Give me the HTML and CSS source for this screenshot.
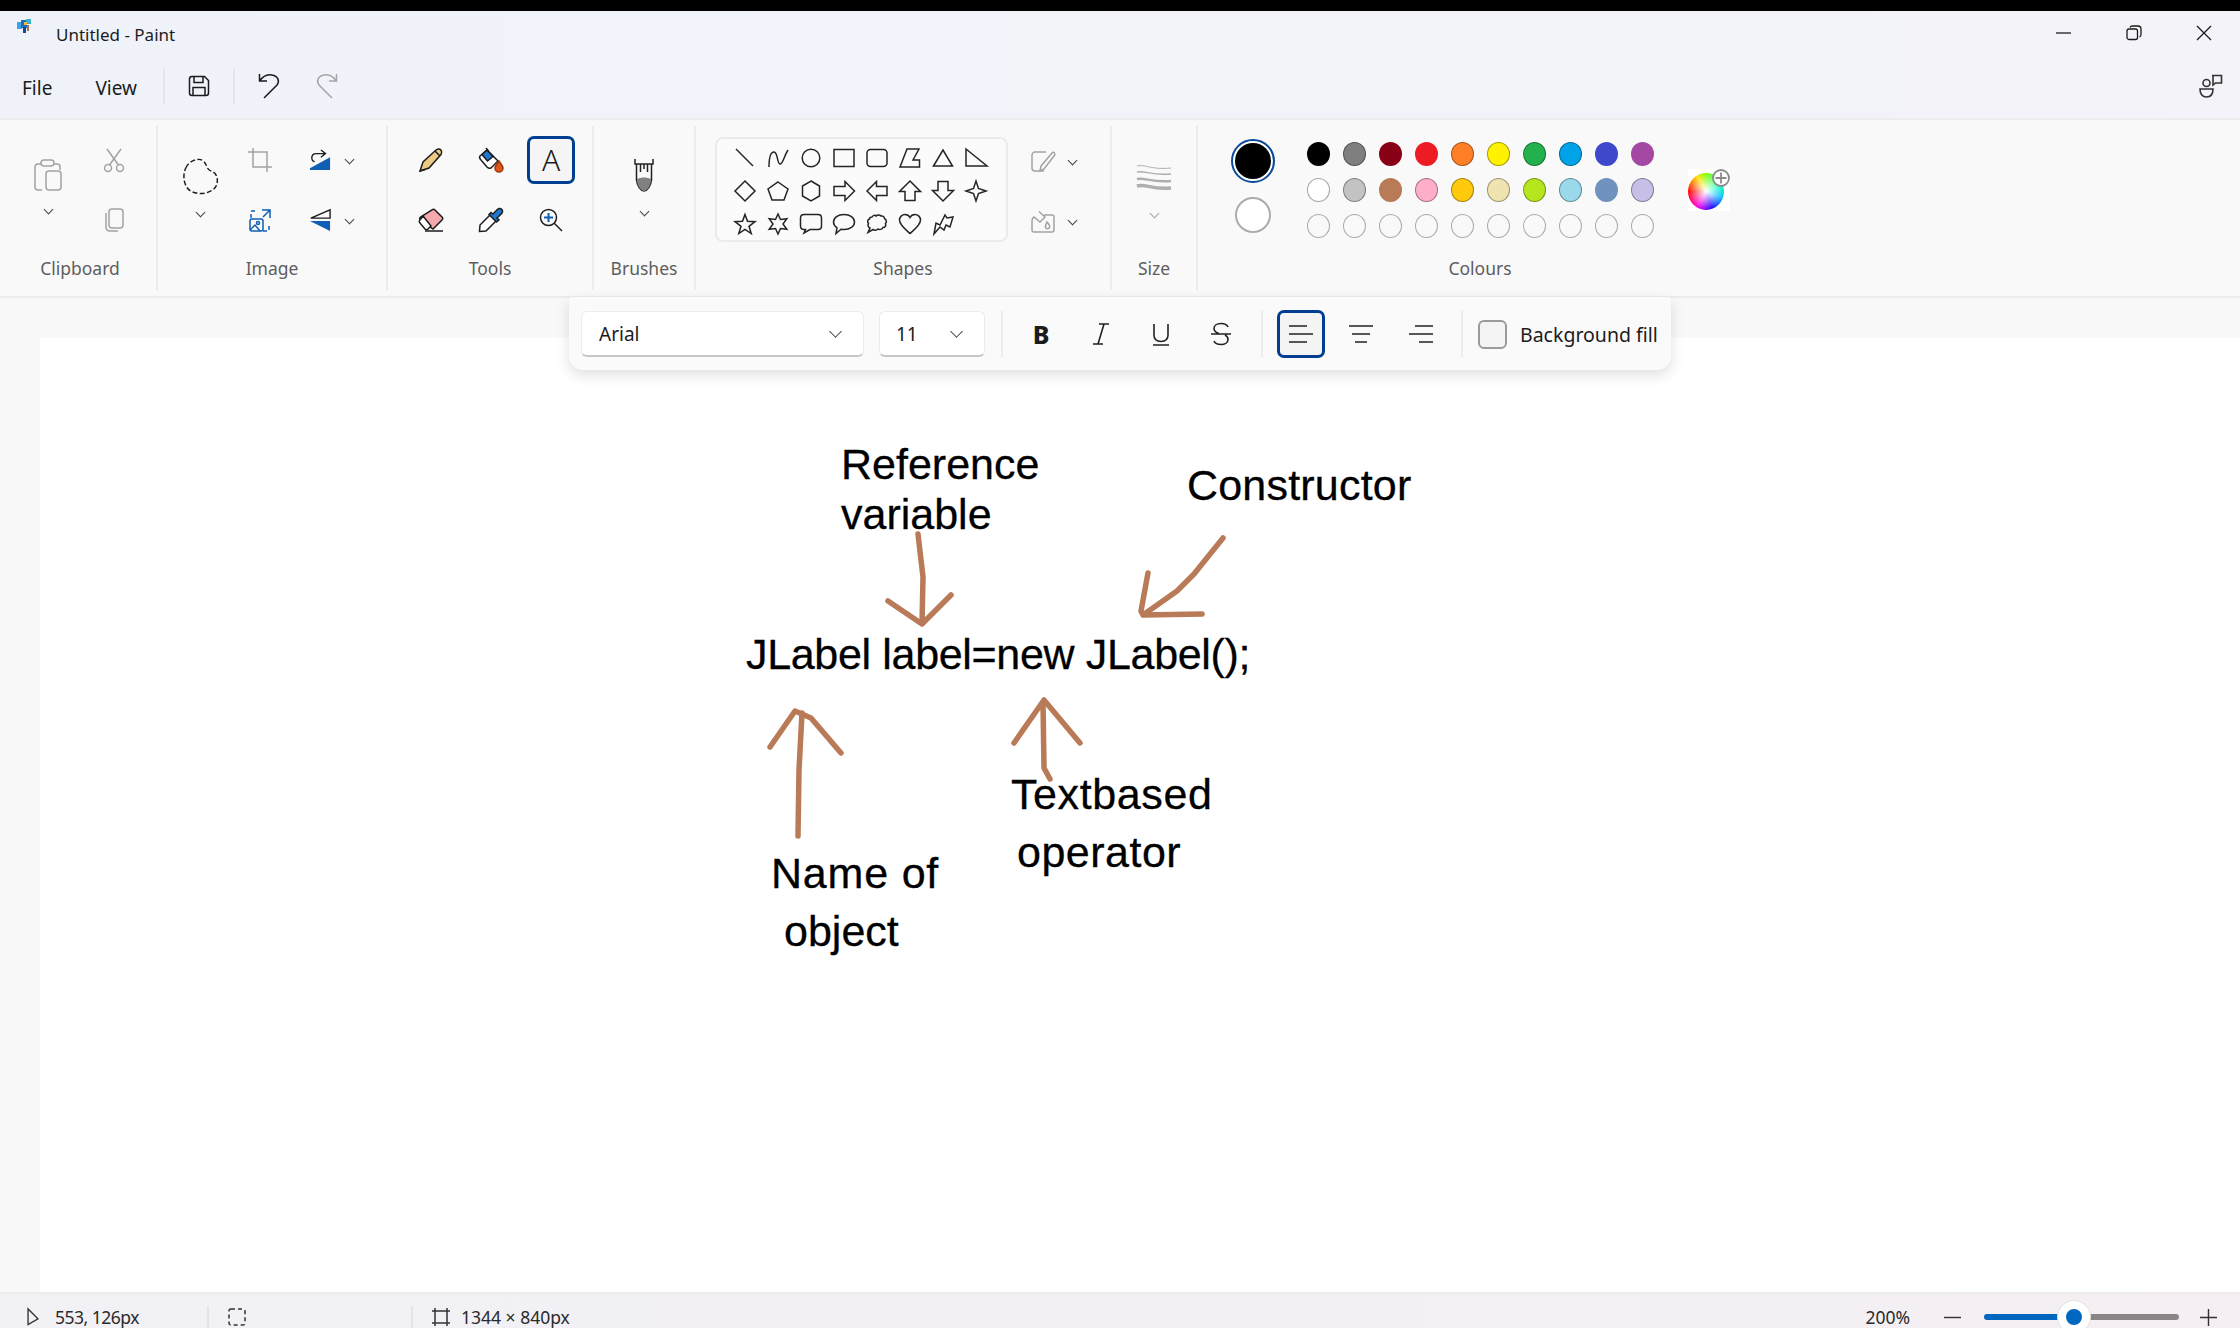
FILE: index.html
```html
<!DOCTYPE html>
<html>
	<head>
		<meta charset="UTF-8"/>
		<title>Untitled - Paint</title>
		<link rel="stylesheet" href="styles.css">
	</head>
	<body>
		<div class="topline"></div>

		<div class="header">
			<div class="titlebar">
				<svg class="app-icon" viewBox="0 0 14 14">
					<rect class="f-sky" x="0" y="3" width="5" height="7"/>
					<rect class="f-blue" x="4" y="1" width="6" height="8"/>
					<rect class="f-teal" x="9" y="0" width="5" height="5"/>
					<rect class="f-gold" x="7" y="3" width="3" height="3"/>
					<rect class="f-navy" x="6" y="8" width="3" height="6"/>
					<rect class="f-brown" x="10" y="6" width="2" height="6"/>
				</svg>
				<span class="title-text">Untitled - Paint</span>
				<div class="window-buttons">
					<svg class="win-btn" viewBox="0 0 16 16"><path d="M0 8H15"/></svg>
					<svg class="win-btn" viewBox="0 0 16 16"><rect x="1" y="4" width="10.500" height="10.500" rx="2"/><path d="M4 2.500C4.500 1.300 5 1 6.500 1H12C14 1 15 2 15 4V9.500C15 11 14.500 11.500 13.500 12"/></svg>
					<svg class="win-btn" viewBox="0 0 16 16"><path d="M1 1L15 15M15 1L1 15"/></svg>
				</div>
			</div>

			<div class="menubar">
				<span class="menu-item menu-file">File</span>
				<span class="menu-item menu-view">View</span>
				<span class="menu-sep menu-sep-first"></span>
				<svg class="menu-icon" viewBox="0 0 22 22"><path d="M1.500 4C1.500 2.500 2.500 1.500 4 1.500H16.500L20.500 5.500V18C20.500 19.500 19.500 20.500 18 20.500H4C2.500 20.500 1.500 19.500 1.500 18Z"/><path d="M6 1.500V7.500H15V1.500M5 20.500V12.500H17V20.500"/></svg>
				<span class="menu-sep"></span>
				<svg class="menu-icon menu-undo" viewBox="0 0 22 26"><path d="M1.500 1V8H9M1.500 8C5 3 10 1 14 2C20 3 22 8 19 12L6 25"/></svg>
				<svg class="menu-icon menu-redo" viewBox="0 0 22 26"><path d="M20.500 1V8H13M20.500 8C17 3 12 1 8 2C2 3 0 8 3 12L16 25"/></svg>
				<svg class="feedback" viewBox="0 0 24 24"><circle cx="7.500" cy="9" r="3.500"/><path d="M1 15H14C14 21 11 23 7.500 23C4 23 1 21 1 15Z"/><path d="M13 1.500H22.500V9H16.500L14 11V1.500Z"/></svg>
			</div>
		</div>

		<div class="ribbon">
			<div class="group group-clipboard">
				<div class="group-body tool-grid">
					<div class="tall-tool">
						<svg class="ic dim ic-paste" viewBox="0 0 28 34"><path d="M8 6H4C2 6 1 7 1 9V29C1 31 2 32 4 32H8M20 6H23C25 6 26 7 26 9V12"/><rect x="7" y="2" width="13" height="6" rx="3"/><rect x="12" y="13" width="15" height="19" rx="3"/></svg>
						<span class="chev"></span>
					</div>
					<div class="tool">
						<svg class="ic dim" viewBox="0 0 24 24"><circle cx="6" cy="20" r="3.500"/><circle cx="18" cy="20" r="3.500"/><path d="M7.500 17L19 1M16.500 17L5 1"/></svg>
					</div>
					<div class="tool tool-r2">
						<svg class="ic dim" viewBox="0 0 24 24"><rect x="7" y="1" width="14" height="19" rx="3"/><path d="M4 5V19C4 21.500 5.500 23 8 23H16"/></svg>
					</div>
				</div>
				<div class="group-label">Clipboard</div>
			</div>

			<div class="group group-image">
				<div class="group-body tool-grid">
					<div class="tall-tool">
						<svg class="ic ic-lasso" viewBox="0 0 38 38"><path class="dashed" d="M4 10C7 3 17 -1 22 3C26 7 25 11 29 13C36 15 38 22 35 29C31 36 18 39 9 34C2 30 0 18 4 10Z"/></svg>
						<span class="chev"></span>
					</div>
					<div class="tool">
						<svg class="ic dim" viewBox="0 0 24 24"><path d="M0 4H19V24M5 0V19H24"/></svg>
					</div>
					<div class="tool tool-split">
						<svg class="ic ic-sm" viewBox="0 0 24 24"><path class="f-ms" d="M1 23V21L23 9V23Z"/><path d="M18 5H8C4 5 3 8 3 10C3 12 4 13 6 14M13 1L18 5L13 9"/></svg>
						<span class="chev"></span>
					</div>
					<div class="tool tool-r2">
						<svg class="ic ic-blue" viewBox="0 0 24 24"><path class="dashed-sm" d="M3 10V3H10M15 23H21V16"/><path d="M14 2H22V10M22 2L15 9"/><rect x="2" y="11" width="13" height="12" rx="2"/><circle cx="10" cy="15" r="1.500"/><path d="M2 22L7 17L12 23"/></svg>
					</div>
					<div class="tool tool-split tool-r2">
						<svg class="ic ic-sm" viewBox="0 0 24 24"><path class="n-line" d="M23 1V10H2Z"/><path class="f-ms" d="M1 13H23V24Z"/></svg>
						<span class="chev"></span>
					</div>
				</div>
				<div class="group-label">Image</div>
			</div>

			<div class="group group-tools">
				<div class="group-body tool-grid three">
					<div class="tool">
						<svg class="ic" viewBox="0 0 24 24"><path class="f-pencil" d="M1 23L4 14L17 2C19 0.500 21 1 22 2C23 3.500 23 5 22 6.500L10 20Z"/><path d="M16 3L21 8M1 23L6 21.500"/></svg>
					</div>
					<div class="tool">
						<svg class="ic" viewBox="0 0 24 24"><path class="f-white" d="M1 8L8 2L19 13L12 20C10 21 9 20 8 19L2 12C1 11 0 9.500 1 8Z"/><path class="f-ms-s" d="M3 6.500L8 2L14 8.500L8.500 13Z"/><path class="f-drop" d="M20 13C22 16 24 18 24 20C24 22.500 22 24 20 24C18 24 16 22.500 16 20C16 18 18 16 20 13Z"/><path d="M7 0L9.500 3"/></svg>
					</div>
					<div class="tool tool-active">
						<span class="big-a">A</span>
					</div>
					<div class="tool tool-r2">
						<svg class="ic" viewBox="0 0 24 24"><path class="f-eraser" d="M13 2C14 1 15 1 16 2L23 9C24 10 24 11 23 12L14 21L1 12C0.500 11 0.500 10 1.500 9Z"/><path class="f-white" d="M4 8L12 18L9 21C8 22 7 22 6 21L1 15C0 14 0 13 1 12Z"/><path d="M6 23H24"/></svg>
					</div>
					<div class="tool tool-r2">
						<svg class="ic" viewBox="0 0 24 24"><path class="f-white" d="M11 7L1 17L0.500 23.500L7 23L17 13"/><path class="f-ms-s" d="M14 6C16 4 18 1 20 0.500C22 0 24 2 23.500 4C23 6 20 8 18 10L20 12L17.500 14L10 6.500L12 4.500Z"/></svg>
					</div>
					<div class="tool tool-r2">
						<svg class="ic ic-zoom" viewBox="0 0 24 24"><circle cx="9.500" cy="9.500" r="8"/><path d="M15 15L23 23"/><path class="n-ms" d="M5 9.500H14M9.500 5V14"/></svg>
					</div>
				</div>
				<div class="group-label">Tools</div>
			</div>

			<div class="group group-brushes">
				<div class="group-body center-col">
					<svg class="ic-brush" viewBox="0 0 20 34"><path d="M1 1V6H19V1M2.500 6V22C3 28 7 33 10 33C13 33 17 28 17.500 22V6"/><path class="f-grey" d="M3 21C8 19 12 19 17 21C17 28 13 33 10 33C7 33 3 28 3 21Z"/><path d="M6.500 6V14M10 6V11M13.500 6V14"/></svg>
					<span class="chev"></span>
				</div>
				<div class="group-label">Brushes</div>
			</div>

			<div class="group group-shapes">
				<div class="group-body shapes-row">
					<div class="shape-box">
						<svg class="shape" viewBox="0 0 20 20"><path d="M1 1L18 18"/></svg>
						<svg class="shape" viewBox="0 0 20 20"><path d="M1 19C1 9 3 4 6 4C10 4 9 16 12 16C15 16 16 8 20 2"/></svg>
						<svg class="shape" viewBox="0 0 20 20"><circle cx="10" cy="10" r="8.800"/></svg>
						<svg class="shape" viewBox="0 0 20 20"><rect x="0" y="1.500" width="20" height="17"/></svg>
						<svg class="shape" viewBox="0 0 20 20"><rect x="0" y="1.500" width="20" height="17" rx="3.500"/></svg>
						<svg class="shape" viewBox="0 0 20 20"><path d="M0 19L7 1H19L13 12H19.500V19Z"/></svg>
						<svg class="shape" viewBox="0 0 20 20"><path d="M0.500 18L10 2L19.500 18Z"/></svg>
						<svg class="shape" viewBox="0 0 20 20"><path d="M0 1V18H21Z"/></svg>

						<svg class="shape" viewBox="0 0 20 20"><path d="M10 0L20 10L10 20L0 10Z"/></svg>
						<svg class="shape" viewBox="0 0 20 20"><path d="M10 1L20 8L16 19H4L0 8Z"/></svg>
						<svg class="shape" viewBox="0 0 20 20"><path d="M10 0L18.500 5V15L10 20L1.500 15V5Z"/></svg>
						<svg class="shape" viewBox="0 0 20 20"><path d="M0 5.500H11V0.500L20.500 10L11 19.500V14.500H0Z"/></svg>
						<svg class="shape" viewBox="0 0 20 20"><path d="M20 5.500H9.500V0.500L0 10L9.500 19.500V14.500H20Z"/></svg>
						<svg class="shape" viewBox="0 0 20 20"><path d="M10 0L20.500 10.500H15V19.500H5V10.500H-0.500Z"/></svg>
						<svg class="shape" viewBox="0 0 20 20"><path d="M10 20L20.500 9.500H15V0.500H5V9.500H-0.500Z"/></svg>
						<svg class="shape" viewBox="0 0 20 20"><path d="M10 0L12.500 7.500L20 10L12.500 12.500L10 20L7.500 12.500L0 10L7.500 7.500Z"/></svg>

						<svg class="shape" viewBox="0 0 20 20"><path d="M10 0.500L12.500 7.300L20 7.700L14 12.300L16.200 19.500L10 15.300L3.800 19.500L6 12.300L0 7.700L7.500 7.300Z"/></svg>
						<svg class="shape" viewBox="0 0 20 20"><path d="M10 0L12.500 5.500L18.800 4.800L15 10L18.800 15.200L12.500 14.500L10 20L7.500 14.500L1.200 15.200L5 10L1.200 4.800L7.500 5.500Z"/></svg>
						<svg class="shape shape-wide" viewBox="0 0 22 20"><path d="M4 0.500H18C20 0.500 21.500 2 21.500 4V12C21.500 14 20 15.500 18 15.500H10L4 19L5.500 15.500H4C2 15.500 0.500 14 0.500 12V4C0.500 2 2 0.500 4 0.500Z"/></svg>
						<svg class="shape shape-wide" viewBox="0 0 22 20"><path d="M11 0.500C17 0.500 21.500 3.500 21.500 8C21.500 12.500 17 15.500 11 15.500C9.500 15.500 9 15.500 8 15.300L3 19.500L4 13.800C2 12.500 0.500 10.500 0.500 8C0.500 3.500 5 0.500 11 0.500Z"/></svg>
						<svg class="shape" viewBox="0 0 20 20"><path d="M5 3C6 1 8 1 9 2C10 0.500 13 0.500 14 2C16 1.500 17.500 3 17.500 4.500C19.500 5.500 20 8 18.500 9.500C19.500 11.500 18 13.500 16 13.500C15 15.500 12.500 16 11 15C9.500 16.500 7 16.500 6 15.500L1 18.500L3 14C1 13 0.500 11 1.500 9.500C0 8 0.500 5.500 2.500 5C2.500 4 3.500 3 5 3Z"/></svg>
						<svg class="shape shape-wide" viewBox="0 0 22 20"><path d="M11 19.500C7 16 0.500 11 0.500 6C0.500 3 3 0.500 6 0.500C8 0.500 10 1.500 11 3.500C12 1.500 14 0.500 16 0.500C19 0.500 21.500 3 21.500 6C21.500 11 15 16 11 19.500Z"/></svg>
						<svg class="shape" viewBox="0 0 20 20"><path d="M1 20L3 9L7 11L12 1L14 4L20 3L17 13L13 11L11 16L7 13Z"/></svg>
					</div>
					<div class="shape-options">
						<div class="shape-option">
							<svg class="ic dim" viewBox="0 0 24 22"><path d="M15 1H4C2.500 1 1 2.500 1 4V17C1 19 2.500 20 4 20H13"/><path d="M10 15L21 2C22 1 23 1 23.500 2C24 3 24 4 23 5L13 18L9 20Z"/></svg>
							<span class="chev"></span>
						</div>
						<div class="shape-option">
							<svg class="ic dim" viewBox="0 0 24 22"><path d="M8 0.500L14 6L9 11L3 6C1 7 1 9 1 10V19C1 20 2 21 3 21H21C22 21 23 20 23 19V6C23 5 22 4 21 4H13"/><path d="M16 11C18 13 19 15 18.500 16.500C18 18 15 18 14.500 16.500C14 15 15 13 16 11Z"/></svg>
							<span class="chev"></span>
						</div>
					</div>
				</div>
				<div class="group-label">Shapes</div>
			</div>

			<div class="group group-size">
				<div class="group-body center-col">
					<svg class="ic-size" viewBox="0 0 34 26"><path class="w1" d="M0 2C8 0 14 6 34 4"/><path class="w2" d="M0 8C8 6 14 12 34 10"/><path class="w3" d="M0 15C8 13 14 19 34 17"/><path class="w4" d="M0 22C8 19 14 26 34 24"/></svg>
					<span class="chev chev-dim"></span>
				</div>
				<div class="group-label">Size</div>
			</div>

			<div class="group group-colours">
				<div class="group-body colours-row">
					<div class="current-colours">
						<span class="current current-fg"><span class="current-dot"></span></span>
						<span class="current current-bg"></span>
					</div>
					<div class="palette">
						<span class="swatch c-black"></span><span class="swatch c-grey edged"></span><span class="swatch c-maroon"></span><span class="swatch c-red"></span><span class="swatch c-orange edged"></span><span class="swatch c-yellow edged"></span><span class="swatch c-green edged"></span><span class="swatch c-cyan edged"></span><span class="swatch c-indigo"></span><span class="swatch c-purple"></span>
						<span class="swatch c-white edged"></span><span class="swatch c-silver edged"></span><span class="swatch c-brown"></span><span class="swatch c-pink edged"></span><span class="swatch c-gold edged"></span><span class="swatch c-cream edged"></span><span class="swatch c-lime edged"></span><span class="swatch c-sky edged"></span><span class="swatch c-steel"></span><span class="swatch c-lavender edged"></span>
						<span class="swatch empty"></span><span class="swatch empty"></span><span class="swatch empty"></span><span class="swatch empty"></span><span class="swatch empty"></span><span class="swatch empty"></span><span class="swatch empty"></span><span class="swatch empty"></span><span class="swatch empty"></span><span class="swatch empty"></span>
					</div>
					<div class="colour-wheel">
						<span class="wheel"></span>
						<svg class="wheel-plus" viewBox="0 0 18 18"><circle cx="9" cy="9" r="8"/><path d="M9 3.500V14.500M3.500 9H14.500"/></svg>
					</div>
				</div>
				<div class="group-label">Colours</div>
			</div>
		</div>

		<div class="workspace">
			<div class="canvas">
				<span class="drawn-text t-reference">Reference</span>
				<span class="drawn-text t-variable">variable</span>
				<span class="drawn-text t-constructor">Constructor</span>
				<span class="drawn-text t-code">JLabel label=new JLabel();</span>
				<span class="drawn-text t-textbased">Textbased</span>
				<span class="drawn-text t-operator">operator</span>
				<span class="drawn-text t-name">Name of</span>
				<span class="drawn-text t-object">object</span>

				<svg class="arrows" viewBox="40 338 2200 954">
					<path d="M918 534L923 577L922 624M888 601L922 624L951 595"/>
					<path d="M1223 538L1194 574L1177 591L1143 615M1148 573L1141 611L1143 615L1202 614"/>
					<path d="M798 836L799 770L802 713M770 747L795 711L811 718L841 753"/>
					<path d="M1050 779L1044 768L1043 702M1014 743L1044 700L1080 743"/>
				</svg>
			</div>

			<div class="text-toolbar">
				<div class="select select-font"><span>Arial</span><span class="chev chev-dark"></span></div>
				<div class="select select-size"><span>11</span><span class="chev chev-dark"></span></div>
				<span class="bar-sep"></span>
				<div class="fmt-btn"><span class="fmt-b">B</span></div>
				<div class="fmt-btn"><svg viewBox="0 0 20 24"><path d="M8 2H18M2 22H12M13 2L7 22"/></svg></div>
				<div class="fmt-btn"><svg viewBox="0 0 20 24"><path d="M3 2V13C3 18 6 19.500 10 19.500C14 19.500 17 18 17 13V2M2 23H18"/></svg></div>
				<div class="fmt-btn fmt-last"><svg viewBox="0 0 22 24"><path d="M18 5C17 2.500 14 1.500 11 1.500C7 1.500 4 3.500 4 6.500C4 9 6 10.500 9 11.500M1 12H21M15 13C17 14 18 15.500 18 17.500C18 20.500 15 22.500 11 22.500C8 22.500 5 21.500 4 19"/></svg></div>
				<span class="bar-sep"></span>
				<div class="fmt-btn fmt-active"><svg viewBox="0 0 24 18"><path d="M0 1H18M0 9H24M0 17H18"/></svg></div>
				<div class="fmt-btn"><svg viewBox="0 0 24 18"><path d="M0 1H24M3 9H21M6 17H18"/></svg></div>
				<div class="fmt-btn fmt-last"><svg viewBox="0 0 24 18"><path d="M6 1H24M0 9H24M10 17H24"/></svg></div>
				<span class="bar-sep"></span>
				<span class="checkbox"></span>
				<span class="check-label">Background fill</span>
			</div>
		</div>

		<div class="statusbar">
			<div class="status-cell status-pos">
				<svg class="status-icon" viewBox="0 0 14 20"><path d="M1.500 1V18.500L12.500 12Z"/></svg>
				<span class="pos-text">553, 126px</span>
			</div>
			<div class="status-cell status-sel">
				<svg class="status-icon" viewBox="0 0 18 18"><rect class="dashed-sm" x="1" y="1" width="16" height="16" rx="2"/></svg>
			</div>
			<div class="status-cell status-size">
				<svg class="status-icon" viewBox="0 0 18 18"><path d="M3 0V18M15 0V18M0 3H18M0 15H18"/></svg>
				<span>1344 × 840px</span>
			</div>
			<div class="zoom-controls">
				<span class="zoom-value">200%</span>
				<svg class="zoom-btn" viewBox="0 0 18 18"><path d="M0 9H18"/></svg>
				<div class="slider">
					<span class="slider-fill"></span>
					<span class="slider-rest"></span>
					<span class="slider-thumb"></span>
				</div>
				<svg class="zoom-btn" viewBox="0 0 18 18"><path d="M0 9H18M9 0V18"/></svg>
			</div>
		</div>
	</body>
</html>
```

FILE: styles.css
```css
html, body {
	margin: 0;
	padding: 0;
	height: 100%;
	overflow: hidden;
	font-family: "Noto Sans", sans-serif;
	color: #1b1b1b;
	background: white;
}

body {
	display: flex;
	flex-direction: column;
	height: 1328px;
}

svg {
	fill: none;
	stroke: currentColor;
	stroke-width: 1.5;
	overflow: visible;
	display: block;
	flex: none;
}

.topline {
	height: 11px;
	background: black;
}

.header {
	background: linear-gradient(90deg, #eff3f9, #f3f3f9);
}

/* title bar */
.titlebar {
	display: flex;
	align-items: center;
	height: 47px;
	padding-left: 17px;
}

.app-icon {
	width: 14px;
	height: 14px;
	margin: -18px 25px 0 0;
	stroke: none;
}

.f-sky { fill: #3aa0e8; }
.f-blue { fill: #1e6fc0; }
.f-teal { fill: #38b6c8; }
.f-gold { fill: #f0b840; }
.f-navy { fill: #0e4a90; }
.f-brown { fill: #a87050; }

.title-text {
	font-size: 17px;
}

.window-buttons {
	display: flex;
	margin: -4px 0 0 auto;
	padding-right: 28px;
	gap: 54px;
}

.win-btn {
	width: 16px;
	height: 16px;
	stroke-width: 1.3;
}

/* menu */
.menubar {
	display: flex;
	align-items: center;
	height: 62px;
	padding-left: 22px;
	border-bottom: 2px solid #ececec;
	box-sizing: border-box;
}

.menu-item {
	font-size: 19px;
}

.menu-view {
	margin-left: 43px;
}

.menu-sep {
	width: 2px;
	height: 35px;
	background: #e6e6e9;
	margin: -4px 23px 0 23px;
}

.menu-sep-first {
	margin-left: 26px;
}

.menu-icon {
	width: 22px;
	height: 22px;
	margin-top: -4px;
}

.menu-undo {
	height: 26px;
}

.menu-redo {
	height: 26px;
	margin-left: 36px;
	color: #a4a4a6;
}

.feedback {
	width: 24px;
	height: 24px;
	margin: -4px 17px 0 auto;
	stroke-width: 1.6;
	color: #333;
}

/* ribbon */
.ribbon {
	display: flex;
	height: 178px;
	background: #f9f9f9;
	border-bottom: 2px solid #ececec;
	box-sizing: border-box;
	padding: 6px 0;
}

.group {
	display: flex;
	flex-direction: column;
	border-right: 2px solid #ececec;
	box-sizing: border-box;
}

.group-body {
	flex: 1;
	padding-top: 10px;
}

.group-label {
	height: 24px;
	line-height: 24px;
	margin-bottom: 10px;
	font-size: 17.500px;
	color: #5e5e5e;
	text-align: center;
}

.group-clipboard { width: 158px; }
.group-image { width: 230px; }
.group-tools { width: 206px; }
.group-brushes { width: 102px; }
.group-shapes { width: 416px; }
.group-size { width: 86px; }
.group-colours { width: 564px; border-right: none; }

.group-clipboard .group-label {
	padding-left: 4px;
}

.tool-grid {
	display: grid;
	grid-template-columns: 48px 48px 48px;
	grid-template-rows: 48px 48px;
	column-gap: 12px;
	row-gap: 12px;
	padding-left: 19px;
	padding-bottom: 0;
}

.group-image .tool-grid {
	padding-left: 18px;
}

.group-clipboard .tool-grid {
	padding-left: 24px;
	grid-template-columns: 48px 48px;
	column-gap: 18px;
}

.tool {
	display: flex;
	align-items: center;
	justify-content: center;
	box-sizing: border-box;
	width: 48px;
	height: 48px;
}

.tall-tool {
	grid-row: 1 / 3;
	display: flex;
	flex-direction: column;
	align-items: center;
	padding-top: 22px;
}

.group-image .tool-r2 {
	grid-column: 2;
}

.group-image .tool-split.tool-r2 {
	grid-column: 3;
}

.group-clipboard .tool-r2 {
	grid-column: 2;
}

.tool-split {
	position: relative;
}

.tool-split .chev {
	position: absolute;
	left: 50px;
	top: 20px;
	margin: 0;
}

.ic {
	width: 24px;
	height: 24px;
	color: #1c1c1c;
}

.dim {
	color: #a3a3a3;
}

.ic-paste {
	width: 28px;
	height: 34px;
}

.ic-lasso {
	width: 37px;
	height: 37px;
}

.ic-sm {
	width: 22px;
	height: 22px;
}

.ic-blue {
	color: #0f5fb4;
}

.dashed {
	stroke-dasharray: 5 2.500;
}

.dashed-sm {
	stroke-dasharray: 4 3;
}

.f-ms {
	fill: #0f5fb4;
	stroke: none;
}

.f-ms-s {
	fill: #1f78cf;
}

.n-line {
	fill: none;
}

.f-pencil { fill: #eccb85; }
.f-white { fill: white; }
.f-drop { fill: #e0561a; stroke: #9a3a10; }
.f-eraser { fill: #f4a9ad; }
.n-ms { stroke: #0f5fb4; stroke-width: 2; }
.f-grey { fill: #808080; stroke: none; }

.tool-active {
	border: 3px solid #003e92;
	border-radius: 7px;
	background: #f5f5f5;
}

.big-a {
	font-family: "Noto Sans", sans-serif;
	font-size: 30px;
	font-weight: 300;
	line-height: 1;
}

/* a little down arrow */
.chev {
	display: inline-block;
	width: 6px;
	height: 6px;
	border-right: 1.500px solid #444;
	border-bottom: 1.500px solid #444;
	transform: rotate(45deg);
	margin-top: 14px;
}

.chev-dim {
	border-color: #a8a8a8;
}

.chev-dark {
	width: 8px;
	height: 8px;
	margin: -4px 0 0 0;
}

.center-col {
	display: flex;
	flex-direction: column;
	align-items: center;
}

.ic-brush {
	width: 20px;
	height: 34px;
	margin-top: 22px;
	color: #222;
	margin-bottom: 2px;
}

.ic-size {
	width: 34px;
	height: 26px;
	margin-top: 28px;
	color: #aeaeae;
	margin-bottom: 6px;
}

.w1 { stroke-width: 1; }
.w2 { stroke-width: 1.500; }
.w3 { stroke-width: 2.500; }
.w4 { stroke-width: 3.500; }

/* shapes */
.shapes-row {
	display: flex;
	padding-left: 19px;
}

.shape-box {
	display: grid;
	grid-template-columns: repeat(8, 33px);
	grid-auto-rows: 33px;
	justify-items: center;
	align-items: center;
	width: 293px;
	height: 105px;
	box-sizing: border-box;
	margin-top: 1px;
	padding: 2px 0 0 11px;
	background: #fbfbfb;
	border: 2px solid #ebebeb;
	border-radius: 8px;
}

.shape {
	width: 20px;
	height: 20px;
	color: #242424;
}

.shape-wide {
	width: 22px;
}

.shape-options {
	display: flex;
	flex-direction: column;
	margin-left: 23px;
	margin-top: 14px;
	gap: 36px;
}

.shape-option {
	display: flex;
	align-items: center;
	gap: 14px;
}

.shape-option .chev {
	margin: -4px 0 0 0;
}

/* colours */
.colours-row {
	display: flex;
	padding-left: 33px;
}

.current-colours {
	display: flex;
	flex-direction: column;
	align-items: center;
	width: 44px;
	margin-top: 3px;
}

.current {
	display: flex;
	align-items: center;
	justify-content: center;
	box-sizing: border-box;
	border-radius: 50%;
}

.current-fg {
	width: 44px;
	height: 44px;
	border: 2px solid #0a4a9a;
	background: white;
}

.current-dot {
	width: 36px;
	height: 36px;
	border-radius: 50%;
	background: black;
}

.current-bg {
	width: 36px;
	height: 36px;
	margin-top: 14px;
	border: 2px solid #acacac;
	background: white;
}

.palette {
	display: grid;
	grid-template-columns: repeat(10, 36px);
	grid-auto-rows: 36px;
	justify-items: center;
	align-items: center;
	margin-left: 25px;
}

.swatch {
	width: 23px;
	height: 24px;
	border-radius: 50%;
	box-sizing: border-box;
}

.edged {
	border: 1.500px solid rgba(0,0,0,0.35);
}

.empty {
	border: 1.500px solid #ababab;
}

.c-black { background: #000000; }
.c-grey { background: #7f7f7f; }
.c-maroon { background: #880015; }
.c-red { background: #ed1c24; }
.c-orange { background: #ff7f27; }
.c-yellow { background: #fff200; }
.c-green { background: #22b14c; }
.c-cyan { background: #00a2e8; }
.c-indigo { background: #3f48cc; }
.c-purple { background: #a349a4; }
.c-white { background: #ffffff; }
.c-silver { background: #c3c3c3; }
.c-brown { background: #b97a57; }
.c-pink { background: #ffaec9; }
.c-gold { background: #ffc90e; }
.c-cream { background: #efe4b0; }
.c-lime { background: #b5e61d; }
.c-sky { background: #99d9ea; }
.c-steel { background: #7092be; }
.c-lavender { background: #c8bfe7; }

.colour-wheel {
	position: relative;
	width: 42px;
	height: 42px;
	margin: 33px 0 0 28px;
	background: white;
}

.wheel {
	display: block;
	width: 36px;
	height: 37px;
	margin-top: 4px;
	border-radius: 50%;
	background: radial-gradient(circle, white 0, rgba(255,255,255,0) 70%), conic-gradient(#80ff00, #00ffc0 70deg, #00c0ff 110deg, #2000ff 160deg, #ff00e0 210deg, #ff0000 270deg, #ffe000 330deg, #80ff00);
}

.wheel-plus {
	position: absolute;
	right: 0;
	top: 0;
	width: 18px;
	height: 18px;
	fill: white;
	color: #8a8a8a;
	stroke-width: 1.800;
}

/* canvas */
.workspace {
	position: relative;
	flex: 1;
	display: flex;
	background: #f8f8f8;
	padding: 40px 0 0 40px;
	min-height: 0;
}

.canvas {
	position: relative;
	flex: 1;
	background: white;
}

.drawn-text {
	position: absolute;
	font-family: "Liberation Sans", sans-serif;
	font-size: 43px;
	line-height: 50px;
	color: black;
	white-space: nowrap;
	-webkit-text-stroke: 0.3px black;
}

.t-reference { left: 801px; top: 101px; }
.t-variable { left: 801px; top: 151px; }
.t-constructor { left: 1147px; top: 122px; letter-spacing: 0.2px; }
.t-code { left: 706px; top: 291px; letter-spacing: -0.33px; }
.t-textbased { left: 971px; top: 431px; letter-spacing: 0.6px; }
.t-operator { left: 977px; top: 489px; letter-spacing: 0.5px; }
.t-name { left: 731px; top: 510px; letter-spacing: 0.8px; }
.t-object { left: 744px; top: 568px; }

.arrows {
	position: absolute;
	left: 0;
	top: 0;
	width: 2200px;
	height: 954px;
	stroke: #b97a57;
	stroke-width: 5.500;
	stroke-linecap: round;
	stroke-linejoin: round;
}

/* text options floating over the canvas */
.text-toolbar {
	position: absolute;
	left: 569px;
	top: -1px;
	display: flex;
	align-items: center;
	width: 1102px;
	height: 73px;
	box-sizing: border-box;
	padding: 1px 0 0 12px;
	background: #fafafa;
	border-radius: 4px 4px 14px 14px;
	box-shadow: 0 5px 14px rgba(0,0,0,0.13);
}

.select {
	display: flex;
	align-items: center;
	justify-content: space-between;
	height: 46px;
	box-sizing: border-box;
	background: white;
	border: 1px solid #ececec;
	border-bottom: 2px solid #c6c6c6;
	border-radius: 6px;
	font-size: 19px;
}

.select-font {
	width: 283px;
	padding: 0 23px 0 17px;
}

.select-size {
	width: 106px;
	margin-left: 15px;
	padding: 0 23px 0 16px;
}

.bar-sep {
	width: 2px;
	height: 46px;
	background: #ececec;
	margin: 0 14px 0 16px;
}

.fmt-btn {
	display: flex;
	align-items: center;
	justify-content: center;
	box-sizing: border-box;
	width: 48px;
	height: 48px;
	margin-right: 12px;
}

.fmt-btn svg {
	width: 24px;
	height: 24px;
	stroke-width: 1.600;
	color: #222;
}

.fmt-last {
	margin-right: 0;
}

.fmt-b {
	font-size: 25px;
	font-weight: 800;
}

.fmt-active {
	border: 3px solid #003e92;
	border-radius: 7px;
	background: #f4f4f4;
}

.checkbox {
	width: 29px;
	height: 29px;
	margin-left: 1px;
	box-sizing: border-box;
	border: 2px solid #9a9a9a;
	border-radius: 6px;
	background: #f4f4f4;
}

.check-label {
	margin-left: 13px;
	font-size: 19.500px;
	white-space: nowrap;
}

/* status bar */
.statusbar {
	display: flex;
	align-items: stretch;
	height: 36px;
	box-sizing: border-box;
	padding-top: 12px;
	background: linear-gradient(90deg, #f1f1f6, #f5eff3);
	border-top: 2px solid #ececec;
	font-size: 17.500px;
	color: #2a2a2a;
}

.status-cell {
	display: flex;
	align-items: center;
	box-sizing: border-box;
	border-right: 2px solid #e4e4e8;
}

.status-pos {
	width: 209px;
	padding-left: 26px;
	gap: 15px;
}

.pos-text {
	letter-spacing: -0.5px;
}

.status-sel {
	width: 204px;
	padding-left: 19px;
}

.status-size {
	border-right: none;
	padding-left: 19px;
	gap: 11px;
}

.status-icon {
	width: 18px;
	height: 18px;
	color: #333;
}

.status-pos .status-icon {
	width: 14px;
}

.zoom-controls {
	display: flex;
	align-items: center;
	margin-left: auto;
	padding-right: 23px;
}

.zoom-value {
	margin-right: 34px;
}

.zoom-btn {
	width: 17px;
	height: 17px;
	color: #333;
}

.slider {
	position: relative;
	display: flex;
	width: 195px;
	height: 6px;
	margin: 0 21px 0 23px;
}

.slider-fill {
	width: 90px;
	background: #0067c0;
	border-radius: 3px 0 0 3px;
}

.slider-rest {
	flex: 1;
	background: #8a8687;
	border-radius: 0 3px 3px 0;
}

.slider-thumb {
	position: absolute;
	left: 74px;
	top: -13px;
	width: 16px;
	height: 16px;
	border: 8px solid white;
	border-radius: 50%;
	background: #0067c0;
	box-shadow: 0 0 0 1px #e4e4e4;
}
```
